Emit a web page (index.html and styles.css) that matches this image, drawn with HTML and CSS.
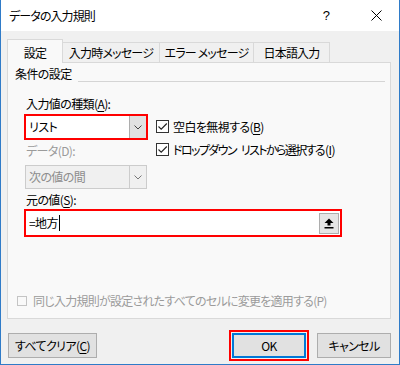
FILE: index.html
```html
<!DOCTYPE html>
<html lang="ja">
<head>
<meta charset="utf-8">
<title>データの入力規則</title>
<link rel="stylesheet" href="styles.css">
</head>
<body>
<div class="dialog">
  <div class="titlebar">
    <span class="title">データの入力規則</span>
    <span class="tb-btn help">?</span>
    <span class="tb-btn close">
      <svg width="11" height="11" viewBox="0 0 11 11"><path d="M0.5 0.5 L10.5 10.5 M10.5 0.5 L0.5 10.5" stroke="#000" stroke-width="1" fill="none"/></svg>
    </span>
  </div>
  <div class="body">
    <div class="tabs">
      <div class="tab active t1">設定</div>
      <div class="tab t2">入力時メッセージ</div>
      <div class="tab t3">エラー メッセージ</div>
      <div class="tab t4">日本語入力</div>
    </div>
    <div class="panel">
      <div class="group-head"><span class="group-title">条件の設定</span><span class="rule"></span></div>
      <div class="criteria">
        <div class="left-col">
          <div class="label lbl-type">入力値の種類(<u>A</u>):</div>
          <div class="combo hl">
            <span class="combo-text">リスト</span>
            <span class="drop"><svg width="8" height="5" viewBox="0 0 8 5"><path d="M0.5 0.5 L4 4 L7.5 0.5" stroke="#444" stroke-width="1" fill="none"/></svg></span>
          </div>
          <div class="label disabled lbl-data">データ(D):</div>
          <div class="combo is-disabled">
            <span class="combo-text">次の値の間</span>
            <span class="drop"><svg width="8" height="5" viewBox="0 0 8 5"><path d="M0.5 0.5 L4 4 L7.5 0.5" stroke="#777" stroke-width="1" fill="none"/></svg></span>
          </div>
        </div>
        <div class="checks">
          <div class="check">
            <span class="box"><svg width="11" height="11" viewBox="0 0 11 11"><path d="M1.5 5.5 L4.2 8.2 L9.8 2.5" stroke="#222" stroke-width="1.1" fill="none"/></svg></span>
            <span>空白を無視する(<u>B</u>)</span>
          </div>
          <div class="check check2">
            <span class="box"><svg width="11" height="11" viewBox="0 0 11 11"><path d="M1.5 5.5 L4.2 8.2 L9.8 2.5" stroke="#222" stroke-width="1.1" fill="none"/></svg></span>
            <span><span class="kana-tight">ドロップダウン<span class="gap"> </span>リストから選択する</span>(<u>I</u>)</span>
          </div>
        </div>
      </div>
      <div class="label lbl-source">元の値(<u>S</u>):</div>
      <div class="source hl">
        <span class="source-text">=地方<span class="caret"></span></span>
        <span class="pick">
          <svg width="10" height="11" viewBox="0 0 10 11"><path d="M5 0.5 L9.5 5 L6.5 5 L6.5 7.5 L3.5 7.5 L3.5 5 L0.5 5 Z" fill="#000"/><rect x="0.5" y="9" width="9" height="1.5" fill="#000"/></svg>
        </span>
      </div>
      <div class="apply-all">
        <span class="box-dis"></span>
        <span>同じ入力規則が設定されたすべてのセルに変更を適用する(P)</span>
      </div>
    </div>
    <div class="buttons">
      <button class="btn clear">すべてクリア(<u>C</u>)</button>
      <span class="ok-wrap"><button class="btn ok">OK</button></span>
      <button class="btn cancel">キャンセル</button>
    </div>
  </div>
</div>
</body>
</html>
```
FILE: styles.css
```css
html, body {
  margin: 0;
  padding: 0;
  background: #ffffff;
}

.dialog {
  width: 400px;
  height: 365px;
  box-sizing: border-box;
  border: 1px solid #2f7bc8;
  border-top: 0;
  background: #f0f0f0;
  display: flex;
  flex-direction: column;
  font-family: "Noto Sans CJK JP", "Noto Sans", sans-serif;
  font-size: 12px;
  line-height: 16px;
  color: #000;
  font-feature-settings: "palt";
  letter-spacing: -0.6px;
}

u {
  text-decoration: underline;
  text-underline-offset: 2px;
}

.titlebar {
  height: 31px;
  background: #ffffff;
  display: flex;
  align-items: center;
  padding-left: 8px;
}

.title {
  flex: 1;
  letter-spacing: -0.9px;
}

.tb-btn {
  width: 46px;
  height: 31px;
  display: flex;
  align-items: center;
  justify-content: center;
}

.help {
  font-family: "Liberation Sans", sans-serif;
  font-size: 13px;
  padding-right: 4px;
}

.body {
  flex: 1;
  display: flex;
  flex-direction: column;
  padding: 8px 8px 0 6px;
}

.tabs {
  display: flex;
  align-items: flex-end;
  height: 23px;
  position: relative;
  z-index: 1;
}

.tab {
  box-sizing: border-box;
  height: 20px;
  border: 1px solid #d9d9d9;
  border-bottom: 0;
  background: #f0f0f0;
  text-align: center;
  padding-top: 2px;
  margin-left: -1px;
  letter-spacing: -0.8px;
}

.tab.active {
  height: 24px;
  margin-bottom: -1px;
  background: #f9f9f9;
  padding-top: 5px;
  margin-left: 0;
}

.t1 { width: 56px; }
.t2 { width: 98px; }
.t3 { width: 95px; }
.t4 { width: 77px; }

.panel {
  box-sizing: border-box;
  height: 257px;
  border: 1px solid #d9d9d9;
  background: #f9f9f9;
  padding: 3px 0 9px 7px;
  display: flex;
  flex-direction: column;
}

.group-head {
  display: flex;
  height: 16px;
}

.rule {
  flex: 1;
  height: 1px;
  background: #d5d5d5;
  margin: 15px 5px 0 6px;
}

.criteria {
  display: flex;
}

.left-col {
  margin-left: 10px;
  width: 122px;
  display: flex;
  flex-direction: column;
}

.label {
  padding-left: 1px;
}

.lbl-type { margin-top: 14px; }
.lbl-data { margin-top: 4px; }
.lbl-source { margin-top: 3px; margin-left: 10px; }

.disabled {
  color: #9b9b9b;
}

.combo {
  box-sizing: border-box;
  height: 24px;
  border: 1px solid #abadb3;
  background: #ffffff;
  display: flex;
  align-items: center;
  margin-top: 3px;
}

.combo.is-disabled {
  margin-top: 6px;
  background: #f0f0f0;
  border-color: #cccccc;
  color: #8d8d8d;
}

.combo-text {
  flex: 1;
  padding-left: 3px;
}

.drop {
  box-sizing: border-box;
  width: 17px;
  height: 22px;
  background: #e1e1e1;
  border-left: 1px solid #adadad;
  display: flex;
  align-items: center;
  justify-content: center;
}

.is-disabled .drop {
  background: #f0f0f0;
  border-left-color: #cccccc;
}

.hl {
  outline: 2px solid #ff0000;
  outline-offset: -1px;
}

.checks {
  margin-left: 9px;
  margin-top: 38px;
  display: flex;
  flex-direction: column;
}

.check {
  display: flex;
  align-items: center;
  height: 13px;
  line-height: 13px;
  white-space: nowrap;
}

.check2 {
  margin-top: 10px;
}

.kana-tight {
  letter-spacing: -1.6px;
  margin-right: 1px;
}

.gap {
  display: inline-block;
  width: 5px;
}

.box {
  box-sizing: border-box;
  width: 13px;
  height: 13px;
  border: 1px solid #333333;
  background: #ffffff;
  margin-right: 4px;
  display: flex;
  align-items: center;
  justify-content: center;
}

.source {
  box-sizing: border-box;
  margin: 2px 0 0 10px;
  width: 316px;
  height: 26px;
  border: 1px solid #abadb3;
  background: #ffffff;
  display: flex;
  align-items: center;
  justify-content: space-between;
}

.source-text {
  padding-left: 3px;
  display: flex;
  align-items: center;
}

.caret {
  width: 1px;
  height: 16px;
  background: #000;
  margin-left: 1px;
}

.pick {
  box-sizing: border-box;
  width: 20px;
  height: 21px;
  margin-right: 1px;
  background: #e5e5e5;
  border: 1px solid #adadad;
  display: flex;
  align-items: center;
  justify-content: center;
}

.apply-all {
  margin-top: auto;
  margin-left: 2px;
  display: flex;
  align-items: center;
  color: #9b9b9b;
  white-space: nowrap;
  letter-spacing: -0.75px;
}

.box-dis {
  box-sizing: border-box;
  width: 10px;
  height: 10px;
  border: 1px solid #c4c4c4;
  background: #f9f9f9;
  margin-right: 6px;
}

.buttons {
  display: flex;
  align-items: center;
  margin-top: 11px;
  gap: 10px;
  padding-left: 1px;
}

.btn {
  box-sizing: border-box;
  height: 25px;
  border: 1px solid #adadad;
  background: #e1e1e1;
  font-family: inherit;
  font-size: 12px;
  font-feature-settings: "palt";
  letter-spacing: -0.6px;
  color: #000;
  padding: 0;
  margin: 0;
}

.clear { width: 89px; }

.ok-wrap {
  margin-left: auto;
  border: 2px solid #ff0000;
  padding: 1px;
  display: flex;
  margin-right: -2px;
}

.ok {
  width: 74px;
  border: 2px solid #0078d7;
}

.cancel { width: 74px; }
```
